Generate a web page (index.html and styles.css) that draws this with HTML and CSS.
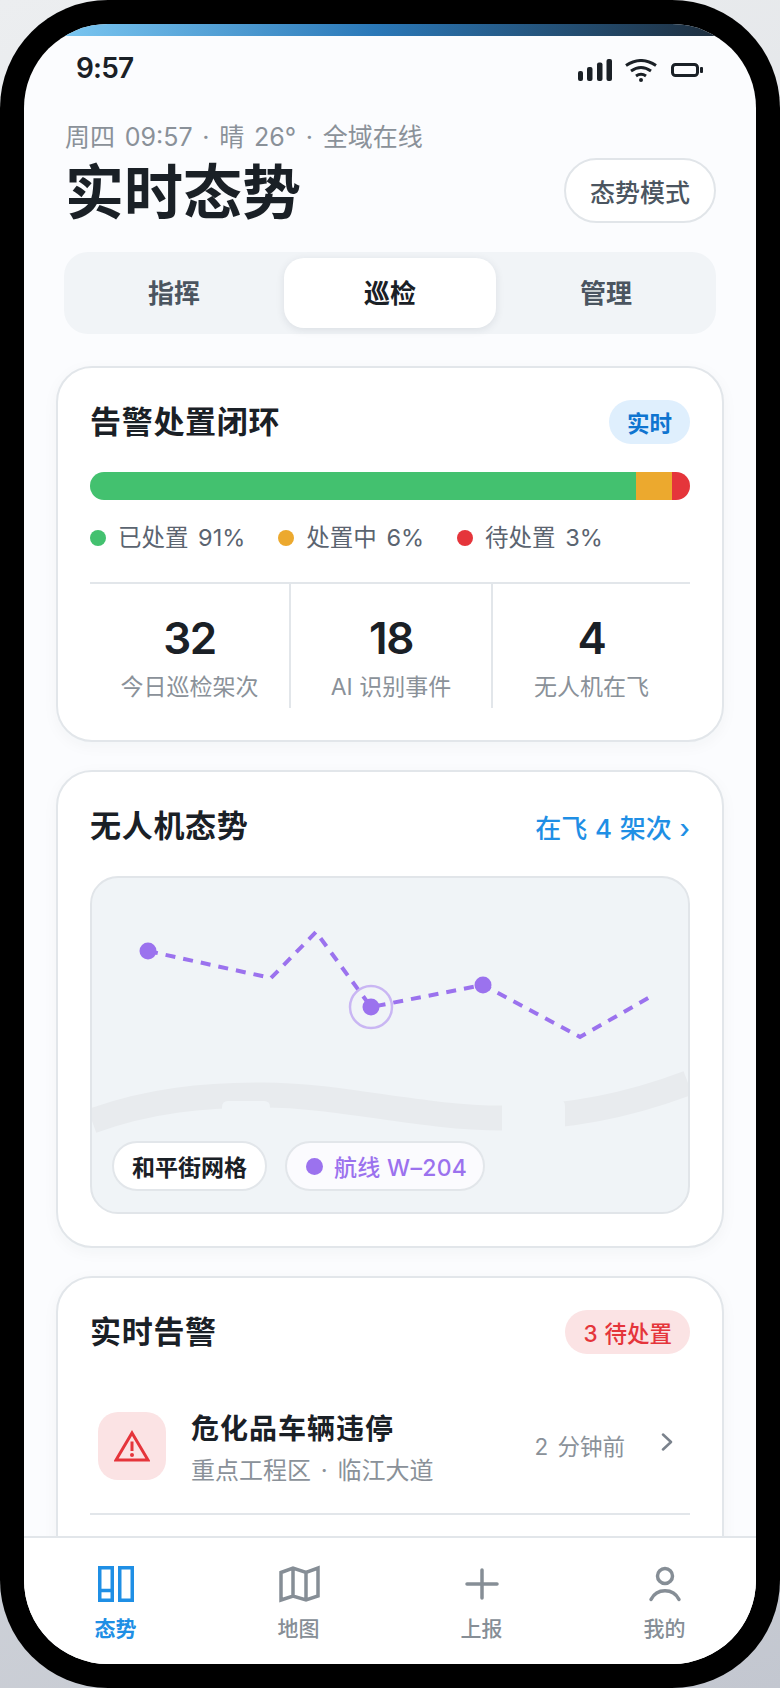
FILE: index.html
```html
<!DOCTYPE html>
<html lang="zh-CN">
<head>
<meta charset="utf-8">
<title>实时态势</title>
<link rel="stylesheet" href="styles.css">
</head>
<body>
<div class="phone">
  <div class="screen">
    <div class="strip"></div>
    <div class="statusbar">
      <span class="clock">9:57</span>
      <div class="status-icons">
        <svg class="ic-signal" viewBox="0 0 34 22" width="34" height="22"><rect x="0" y="12" width="5" height="10" rx="2"/><rect x="9" y="8" width="5.5" height="14" rx="2"/><rect x="19" y="3.500" width="5.500" height="18.500" rx="2"/><rect x="28.500" y="0" width="5.500" height="22" rx="2"/></svg>
        <svg class="ic-wifi" viewBox="0 0 32 23" width="32" height="23"><path d="M1 6.500Q16-3.500 31 6.500M6 12Q16 5 26 12M11 17Q16 13.500 21 17"/><circle cx="16" cy="21" r="2"/></svg>
        <svg class="ic-batt" viewBox="0 0 32 14" width="32" height="14"><rect x="1.500" y="1.500" width="25" height="11" rx="3"/><rect class="cap" x="29" y="4" width="3" height="6" rx="1"/></svg>
      </div>
    </div>
    <div class="scroll">
      <header class="head">
        <div class="meta">周四 09:57 · 晴 26° · 全域在线</div>
        <div class="head-row">
          <h1 class="title">实时态势</h1>
          <div class="mode-btn">态势模式</div>
        </div>
      </header>
      <nav class="segment">
        <div class="seg">指挥</div>
        <div class="seg seg-on">巡检</div>
        <div class="seg">管理</div>
      </nav>

      <section class="card">
        <div class="card-head">
          <h2 class="card-title">告警处置闭环</h2>
          <span class="pill pill-blue">实时</span>
        </div>
        <div class="bar">
          <div class="bar-g"></div><div class="bar-o"></div><div class="bar-r"></div>
        </div>
        <div class="legend">
          <div class="leg"><i class="dot dot-g"></i>已处置 91%</div>
          <div class="leg"><i class="dot dot-o"></i>处置中 6%</div>
          <div class="leg"><i class="dot dot-r"></i>待处置 3%</div>
        </div>
        <div class="stats">
          <div class="stat"><div class="num">32</div><div class="lab">今日巡检架次</div></div>
          <div class="stat"><div class="num">18</div><div class="lab">AI 识别事件</div></div>
          <div class="stat"><div class="num">4</div><div class="lab">无人机在飞</div></div>
        </div>
      </section>

      <section class="card">
        <div class="card-head">
          <h2 class="card-title">无人机态势</h2>
          <span class="link">在飞 4 架次 ›</span>
        </div>
        <div class="map">
          <svg class="map-art" viewBox="92 878 596 334" width="596" height="334">
            <path class="road" d="M92 1121C150 1100 205 1095 263 1095C340 1095 420 1118 502 1118C570 1118 630 1105 688 1083"/>
            <path class="road-cut" d="M222 1112V1107Q222 1101 228 1101H264Q270 1101 270 1107V1112Z"/>
            <path class="road-cut" d="M502 1100H559Q565 1100 565 1106V1140H502Z"/>
            <path class="route" d="M148 951L271 978L316 932L371 1007L483 985L580 1037L650 997"/>
            <circle class="ring" cx="371" cy="1007" r="21"/>
            <circle class="node" cx="148" cy="951" r="8.500"/>
            <circle class="node" cx="371" cy="1007" r="8.500"/>
            <circle class="node" cx="483" cy="985" r="8.500"/>
          </svg>
          <div class="chips">
            <span class="chip">和平街网格</span>
            <span class="chip chip-route"><i class="chip-dot"></i>航线 W–204</span>
          </div>
        </div>
      </section>

      <section class="card card-last">
        <div class="card-head">
          <h2 class="card-title">实时告警</h2>
          <span class="pill pill-red">3 待处置</span>
        </div>
        <div class="alert">
          <div class="alert-ic">
            <svg viewBox="0 0 36 32" width="36" height="32"><path class="tri" d="M18 3L34 30H2Z"/><path class="tri-mark" d="M18 11.500V21"/><circle class="tri-dot" cx="18" cy="25" r="2"/></svg>
          </div>
          <div class="alert-body">
            <div class="alert-title">危化品车辆违停</div>
            <div class="alert-sub">重点工程区 · 临江大道</div>
          </div>
          <div class="alert-time">2 分钟前</div>
          <svg class="alert-chev" viewBox="0 0 12 18" width="12" height="18"><path d="M2 1.500L10 9L2 16.500"/></svg>
        </div>
      </section>
    </div>
    <footer class="tabbar">
      <div class="tab tab-on">
        <svg class="tab-ic" viewBox="0 0 44 40" width="44" height="40"><path class="sq" d="M5.750 3.750H18.250V36.250H5.750ZM5.750 26.500H18.250M25.750 3.750H38.250V36.250H25.750Z"/></svg>
        <span>态势</span>
      </div>
      <div class="tab">
        <svg class="tab-ic" viewBox="0 0 44 40" width="44" height="40"><path class="sq" d="M4 8.500L16 4L29 8.500L41 4V32L29 36L16 32L4 36ZM16 4V32M29 8.500V36"/></svg>
        <span>地图</span>
      </div>
      <div class="tab">
        <svg class="tab-ic" viewBox="0 0 44 40" width="44" height="40"><path class="rd" d="M7 20H37M22 6V34"/></svg>
        <span>上报</span>
      </div>
      <div class="tab">
        <svg class="tab-ic" viewBox="0 0 44 40" width="44" height="40"><circle class="rd" cx="22" cy="12" r="7.500"/><path class="rd" d="M8 35.500C11 29.500 16 26.800 22 26.800S33 29.500 36 35.500"/></svg>
        <span>我的</span>
      </div>
    </footer>
  </div>
</div>
</body>
</html>
```

FILE: styles.css
```css
* { box-sizing: border-box; }
html, body { margin: 0; padding: 0; }
body {
  width: 780px;
  height: 1688px;
  overflow: hidden;
  background: linear-gradient(160deg, #eceef0 0%, #d9dce0 55%, #c3c7d0 100%);
  font-family: Inter, "Noto Sans CJK SC", sans-serif;
  color: #1a2026;
  word-spacing: 3px;
}
.phone {
  width: 780px;
  height: 1688px;
  padding: 24px;
  background: #000;
  border-radius: 108px;
}
.screen {
  width: 732px;
  height: 1640px;
  background: #fbfcfe;
  border-radius: 84px;
  overflow: hidden;
  display: flex;
  flex-direction: column;
}
.strip {
  height: 12px;
  flex: none;
  background: linear-gradient(90deg, #84d0f8 0%, #2a78b8 48%, #1d2630 100%);
}
.statusbar {
  height: 64px;
  flex: none;
  padding: 0 53px 0 52px;
  display: flex;
  align-items: center;
  justify-content: space-between;
}
.clock { font-size: 28px; font-weight: 600; letter-spacing: -.8px; }
.status-icons { display: flex; align-items: center; gap: 13px; padding-top: 4px; }
.ic-signal { fill: #1a2026; }
.ic-wifi path { fill: none; stroke: #1a2026; stroke-width: 3; }
.ic-wifi circle { fill: #1a2026; }
.ic-batt { margin-left: 1px; }
.ic-batt rect { fill: none; stroke: #1a2026; stroke-width: 3; }
.ic-batt .cap { fill: #1a2026; stroke: none; }

.scroll { flex: 1; min-height: 0; overflow: hidden; }
.head { padding: 19px 40px 0 41px; }
.meta { font-size: 25px; line-height: 36px; color: #8a9199; word-spacing: 2.700px; }
.head-row {
  margin-top: 3px;
  display: flex;
  align-items: center;
  justify-content: space-between;
}
.title { margin: 0; padding-top: 4px; font-size: 59px; line-height: 61px; font-weight: 700; }
.mode-btn {
  width: 152px;
  height: 65px;
  border: 2px solid #e1e5e9;
  border-radius: 33px;
  background: #fff;
  display: flex;
  align-items: center;
  justify-content: center;
  font-size: 25px;
  font-weight: 500;
  color: #4b5560;
}
.segment {
  margin: 29px 40px 0;
  height: 82px;
  padding: 6px;
  background: #f1f4f7;
  border-radius: 24px;
  display: grid;
  grid-template-columns: 1fr 212px 1fr;
}
.seg {
  display: flex;
  align-items: center;
  justify-content: center;
  padding-bottom: 4px;
  font-size: 26px;
  font-weight: 600;
  color: #4b5560;
  border-radius: 20px;
}
.seg:first-child { padding-right: 6px; }
.seg:last-child { padding-left: 6px; }
.seg-on { background: #fff; color: #1a2026; box-shadow: 0 2px 8px rgba(30, 40, 60, .1); }

.card {
  margin: 28px 32px 0;
  padding: 32px;
  background: #fff;
  border: 2px solid #e2e6ea;
  border-radius: 36px;
  box-shadow: 0 4px 16px rgba(30, 40, 60, .04);
}
.segment + .card { margin-top: 32px; }
.card-last { padding-bottom: 120px; }
.card-head {
  height: 44px;
  display: flex;
  align-items: center;
  justify-content: space-between;
}
.card-title { margin: 0; font-size: 31px; line-height: 44px; font-weight: 600; letter-spacing: .7px; }
.pill {
  height: 44px;
  padding: 0 18px;
  border-radius: 22px;
  display: flex;
  align-items: center;
  font-size: 22.500px;
}
.pill-blue { background: #dfeffd; color: #0f75d0; font-weight: 600; }
.pill-red { background: #fbe3e4; color: #e5353b; font-weight: 500; word-spacing: 1px; }
.link { font-size: 26px; font-weight: 500; color: #1f8fe5; word-spacing: .8px; }

.bar {
  margin-top: 28px;
  height: 28px;
  border-radius: 14px;
  overflow: hidden;
  display: flex;
}
.bar-g { width: 91%; background: #43c16f; }
.bar-o { width: 6%; background: #eca92e; }
.bar-r { width: 3%; background: #e5353b; }
.legend { margin-top: 20px; display: flex; gap: 33px; }
.leg {
  display: flex;
  align-items: center;
  gap: 12px;
  font-size: 23.500px;
  line-height: 36px;
  color: #5b6470;
}
.dot { width: 16px; height: 16px; border-radius: 50%; flex: none; }
.dot-g { background: #43c16f; }
.dot-o { background: #eca92e; }
.dot-r { background: #e5353b; }
.stats {
  margin-top: 26px;
  border-top: 2px solid #e2e6ea;
  display: grid;
  grid-template-columns: 199px 202px 199px;
}
.stat { padding: 28px 0 3px; text-align: center; }
.stat + .stat { border-left: 2px solid #e2e6ea; }
.num { font-size: 44px; line-height: 52px; font-weight: 600; letter-spacing: -1.500px; }
.lab { margin-top: 5px; font-size: 23px; line-height: 36px; color: #8a9199; word-spacing: 0; }

.map {
  position: relative;
  margin-top: 28px;
  height: 338px;
  background: #f0f4f7;
  border: 2px solid #e1e5e9;
  border-radius: 28px;
  overflow: hidden;
}
.map-art { position: absolute; left: 0; top: 0; }
.road { fill: none; stroke: #e8ebee; stroke-width: 25; }
.road-cut { fill: #f0f4f7; }
.route { fill: none; stroke: #9b72ee; stroke-width: 4; stroke-dasharray: 10 8; }
.ring { fill: none; stroke: #c9b6f3; stroke-width: 2.500; }
.node { fill: #9b72ee; }
.chips { position: absolute; left: 20px; bottom: 21px; display: flex; gap: 18px; }
.chip {
  height: 50px;
  padding: 0 18px;
  background: #fff;
  border: 2px solid #e2e6ea;
  border-radius: 25px;
  display: flex;
  align-items: center;
  font-size: 23px;
  font-weight: 600;
  color: #1a2026;
}
.chip-route { padding: 0 16px 0 19px; gap: 11px; font-weight: 500; color: #9b72ee; background: #fbfbfe; letter-spacing: .3px; word-spacing: 0; }
.chip-dot { width: 17px; height: 17px; border-radius: 50%; background: #9b72ee; }

.alert {
  margin-top: 25px;
  padding: 27px 17px 27px 8px;
  border-bottom: 2px solid #e2e6ea;
  display: flex;
  align-items: center;
}
.alert-ic {
  width: 68px;
  height: 68px;
  flex: none;
  border-radius: 20px;
  background: #fbe3e4;
  display: flex;
  align-items: center;
  justify-content: center;
}
.tri { fill: none; stroke: #e5353b; stroke-width: 3; }
.tri-mark { fill: none; stroke: #e5353b; stroke-width: 3; }
.tri-dot { fill: #e5353b; }
.alert-body { margin: 3px 0 -3px 25px; flex: 1; }
.alert-title { font-size: 28px; line-height: 40px; font-weight: 600; letter-spacing: 1px; }
.alert-sub { margin-top: 4px; font-size: 24px; line-height: 36px; color: #8a9199; }
.alert-time { margin-top: -2px; font-size: 22.500px; color: #8a9199; }
.alert-chev { margin: -8px 0 0 36px; flex: none; }
.alert-chev path { fill: none; stroke: #7a828c; stroke-width: 2.500; stroke-linecap: round; stroke-linejoin: round; }

.tabbar {
  height: 128px;
  flex: none;
  padding-top: 26px;
  background: #fff;
  border-top: 2px solid #e2e6ea;
  display: grid;
  grid-template-columns: repeat(4, 1fr);
}
.tab {
  display: flex;
  flex-direction: column;
  align-items: center;
  gap: 11px;
  color: #868e96;
  font-size: 21px;
  line-height: 28px;
  font-weight: 500;
}
.tab-on { color: #1f8fe5; font-weight: 600; }
.tab-ic { fill: none; stroke: currentColor; }
.sq { stroke-width: 3.500; }
.rd { stroke-width: 3.500; stroke-linecap: round; }
```
